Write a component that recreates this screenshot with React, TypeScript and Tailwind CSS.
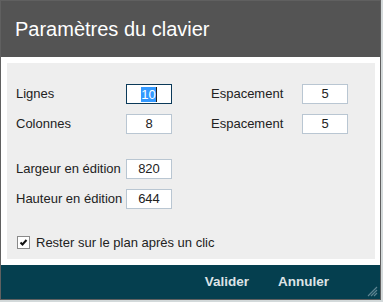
import React from "react";

type FieldProps = { value: string; focused?: boolean };

const Field = ({ value, focused }: FieldProps) => (
  <div
    className={
      "flex h-[20px] w-[46px] items-center justify-center bg-white text-[13px] text-[#222] " +
      (focused ? "border border-[#0b3a5a]" : "border border-[#b9c6d2]")
    }
  >
    {focused ? (
      <span className="flex items-center">
        <span className="bg-[#3399ff] leading-[15px] text-white">{value}</span>
        <span className="h-[15px] w-px bg-[#222]" />
      </span>
    ) : (
      value
    )}
  </div>
);

const Row = ({ label, children }: { label: string; children: React.ReactNode }) => (
  <div className="flex h-[20px] items-center">
    <span className="w-[110px] text-[13px] text-[#222]">{label}</span>
    {children}
  </div>
);

const App = () => {
  return (
    <div
      className="h-[302px] w-[383px] bg-[#d3d9da]"
      style={{ fontFamily: '"Liberation Sans", Arial, sans-serif' }}
    >
      <div className="flex h-[300px] w-[381px] flex-col border border-[#606060] bg-white">
        {/* header */}
        <div className="flex h-[56px] items-center bg-[#545454] pl-[14px]">
          <h1 className="text-[20px] text-white">Paramètres du clavier</h1>
        </div>

        {/* body */}
        <div className="flex-1 pb-[6px] pl-[6px] pr-[5px] pt-[6px]">
          <div className="flex h-full flex-col bg-[#eeeeee] pl-[9px] pt-[21px]">
            <div className="flex flex-col gap-[10px]">
              <div className="flex items-center">
                <Row label="Lignes">
                  <Field value="10" focused />
                </Row>
                <div className="ml-[39px] flex items-center">
                  <span className="w-[91px] text-[13px] text-[#222]">Espacement</span>
                  <Field value="5" />
                </div>
              </div>
              <div className="flex items-center">
                <Row label="Colonnes">
                  <Field value="8" />
                </Row>
                <div className="ml-[39px] flex items-center">
                  <span className="w-[91px] text-[13px] text-[#222]">Espacement</span>
                  <Field value="5" />
                </div>
              </div>
            </div>

            <div className="mt-[25px] flex flex-col gap-[10px]">
              <Row label="Largeur en édition">
                <Field value="820" />
              </Row>
              <Row label="Hauteur en édition">
                <Field value="644" />
              </Row>
            </div>

            <div className="ml-px mt-[24px] flex items-center gap-[6px]">
              <div className="flex h-[13px] w-[13px] items-center justify-center border border-[#8a8a8a] bg-white">
                <svg width="9" height="9" viewBox="0 0 9 9">
                  <path d="M1.5 4.5 L3.5 6.5 L7.5 2" fill="none" stroke="#111" strokeWidth="2" />
                </svg>
              </div>
              <span className="text-[13px] text-[#222]">Rester sur le plan après un clic</span>
            </div>
          </div>
        </div>

        {/* footer */}
        <div className="relative flex h-[34px] items-center justify-end gap-[29px] bg-[#053f4f] pr-[51px]">
          <button className="text-[13.5px] font-bold text-[#dde3e6]">Valider</button>
          <button className="text-[13.5px] font-bold text-[#dde3e6]">Annuler</button>
          <svg className="absolute bottom-[2px] right-[2px]" width="11" height="11" viewBox="0 0 11 11">
            <path d="M10 1 L1 10 M10 4 L4 10 M10 7 L7 10" stroke="#5d8390" strokeWidth="1.2" />
          </svg>
        </div>
      </div>
    </div>
  );
};

export default App;
